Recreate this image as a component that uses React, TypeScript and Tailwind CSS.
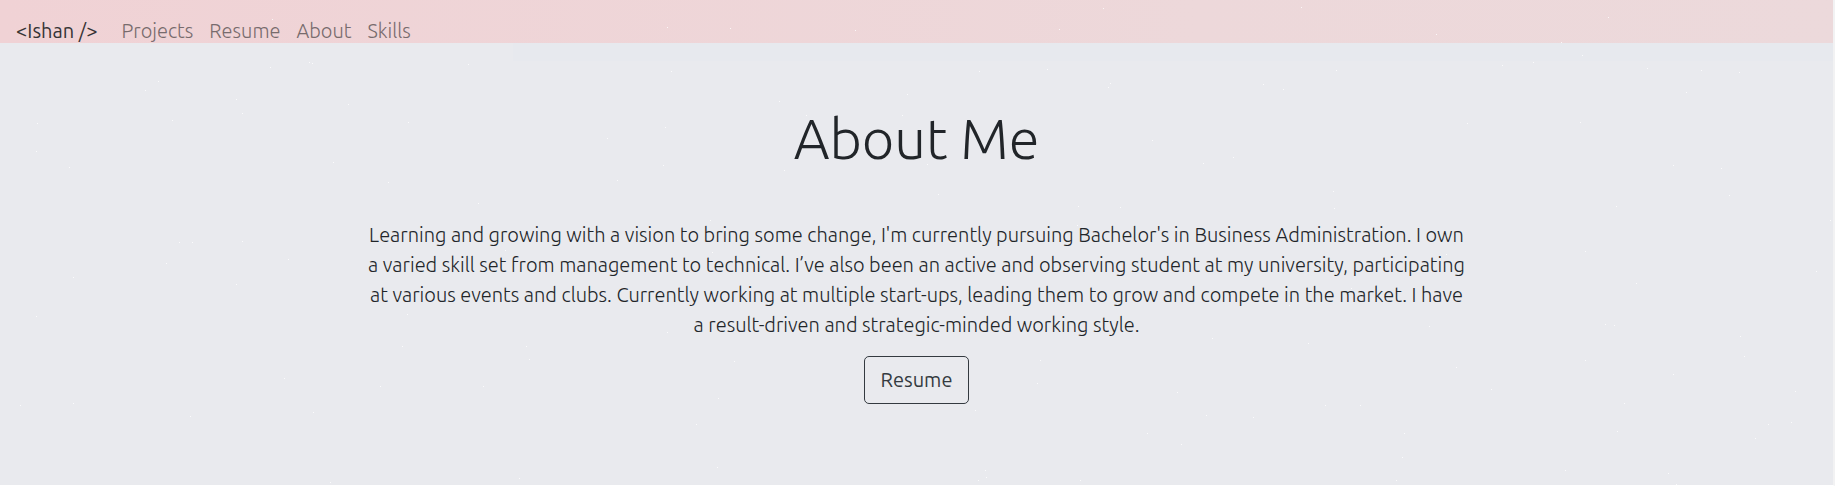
const links = ["Projects", "Resume", "About", "Skills"];

const stars: [number, number][] = [
  [272, 19], [667, 27], [730, 28], [855, 30], [309, 62], [312, 63], [468, 64], [270, 67], [671, 71],
  [158, 81], [145, 90], [236, 99], [348, 104], [779, 101], [907, 94], [902, 115], [242, 113], [37, 123],
  [172, 120], [408, 122], [665, 127], [607, 138], [36, 151], [69, 167], [333, 162], [663, 165], [784, 170],
  [617, 180], [388, 182], [478, 203], [710, 220], [179, 242], [192, 242], [242, 241], [806, 115],
  [1103, 8], [1301, 7], [1059, 29], [1436, 34], [1608, 17], [1561, 42], [1582, 55], [979, 71], [1047, 69],
  [1336, 70], [1502, 65], [1533, 62], [1647, 68], [1701, 70], [1739, 72], [1110, 83], [1108, 87],
  [1263, 84], [1283, 89], [1686, 92], [1467, 123], [1580, 122], [1152, 140], [1233, 157], [1203, 163],
  [1673, 165], [1721, 168], [927, 164], [938, 194], [1078, 206], [1120, 207], [1333, 191], [1334, 208],
  [1616, 206], [1729, 195], [1830, 220], [1077, 225],
  [505, 250], [712, 252], [288, 259], [166, 263], [73, 277], [236, 284], [36, 316], [407, 314], [667, 332],
  [402, 346], [526, 346], [529, 359], [734, 361], [284, 378], [380, 386], [483, 386], [718, 398], [20, 405],
  [73, 403], [190, 416], [313, 412], [696, 424], [717, 467], [519, 478], [330, 482],
  [1446, 254], [1585, 251], [1816, 271], [1636, 283], [1351, 288], [1289, 305], [1605, 324], [1614, 325],
  [1429, 326], [1740, 336], [1212, 338], [1308, 343], [1040, 360], [1585, 360], [1744, 356], [1456, 367],
  [1673, 374], [1037, 383], [1177, 392], [1491, 389], [1795, 391], [975, 410], [1206, 415], [1253, 417],
  [1325, 405], [1360, 405], [1624, 403], [1147, 433], [1181, 444], [1404, 433], [1617, 431], [1768, 424],
  [1791, 422], [1755, 438], [1402, 457], [985, 470], [986, 477], [978, 480], [1080, 480], [1396, 480],
  [1565, 470], [1668, 473], [1676, 484],
];

function Stars() {
  return (
    <svg className="pointer-events-none absolute inset-0 size-full" aria-hidden="true" fill="#ffffff">
      {stars.map(([x, y]) => (
        <rect key={`${x}-${y}`} x={x} y={y} width="1" height="1" opacity="0.8" />
      ))}
    </svg>
  );
}

export default function App() {
  return (
    <div className="relative flex min-h-screen flex-col border-r-2 border-b border-r-[#f2f2f3] border-b-white bg-[#e9eaee] font-[Ubuntu,Lato,sans-serif] text-xl leading-[30px] font-light text-[#212529]">
      <nav className="flex items-end gap-6 bg-linear-to-r from-[#f0d2d5] via-[#edd8da] via-65% to-[#ecd9db] px-4 pt-[19px] leading-6">
        <a href="#home" className="font-normal text-[#363435]">
          &lt;Ishan /&gt;
        </a>
        <ul className="flex gap-4">
          {links.map((label) => (
            <li key={label}>
              <a href={`#${label.toLowerCase()}`} className="text-[#776b6d]">
                {label}
              </a>
            </li>
          ))}
        </ul>
      </nav>
      <main className="flex grow flex-col bg-[linear-gradient(to_right,#e9eaee_28%,#e7e9ee_28%)] bg-size-[100%_18px] bg-no-repeat px-4 pt-[62px] pb-20">
        <div className="mx-auto flex max-w-[1104px] flex-col items-center text-center">
          <h1 className="mb-12 text-[56px] leading-[67px]">About Me</h1>
          <p id="about" className="mb-4">
            Learning and growing with a vision to bring some change, I'm currently pursuing Bachelor's in
            Business Administration. I own a varied skill set from management to technical. I’ve also been an
            active and observing student at my university, participating at various events and clubs.
            Currently working at multiple start-ups, leading them to grow and compete in the market. I have a
            result-driven and strategic-minded working style.
          </p>
          <a
            href="#resume"
            className="rounded-[5px] border border-[#343a40] px-4 py-2 font-normal text-[#343a40]"
          >
            Resume
          </a>
        </div>
      </main>
      <Stars />
    </div>
  );
}
